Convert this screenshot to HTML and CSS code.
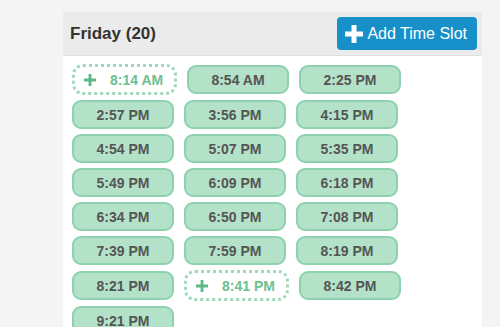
FILE: index.html
```html
<!DOCTYPE html>
<html lang="en">
<head>
    <meta charset="utf-8" />
    <title>Time Slots</title>
    <link rel="stylesheet" href="styles.css">
</head>
<body>
    <div class="day_panel">
        <div class="day_header">
            <span class="day_title">Friday (20)</span>
            <a class="add_button">
                <svg class="add_icon" viewBox="0 0 18 18" width="18" height="18">
                    <path d="M6.5 0h5v6.5H18v5h-6.5V18h-5v-6.5H0v-5h6.5z" fill="#fff" />
                </svg>
                Add Time Slot
            </a>
        </div>
        <div class="slot_wrapper">
            <a class="slot slot_new">
                <svg class="plus" viewBox="0 0 12 12" width="12" height="12"><path d="M4.6 0h2.8v4.6H12v2.8H7.4V12H4.6V7.4H0V4.6h4.6z" /></svg>
                8:14 AM
            </a>
            <a class="slot">8:54 AM</a>
            <a class="slot">2:25 PM</a>
            <a class="slot">2:57 PM</a>
            <a class="slot">3:56 PM</a>
            <a class="slot">4:15 PM</a>
            <a class="slot">4:54 PM</a>
            <a class="slot">5:07 PM</a>
            <a class="slot">5:35 PM</a>
            <a class="slot">5:49 PM</a>
            <a class="slot">6:09 PM</a>
            <a class="slot">6:18 PM</a>
            <a class="slot">6:34 PM</a>
            <a class="slot">6:50 PM</a>
            <a class="slot">7:08 PM</a>
            <a class="slot">7:39 PM</a>
            <a class="slot">7:59 PM</a>
            <a class="slot">8:19 PM</a>
            <a class="slot">8:21 PM</a>
            <a class="slot slot_new">
                <svg class="plus" viewBox="0 0 12 12" width="12" height="12"><path d="M4.6 0h2.8v4.6H12v2.8H7.4V12H4.6V7.4H0V4.6h4.6z" /></svg>
                8:41 PM
            </a>
            <a class="slot">8:42 PM</a>
            <a class="slot">9:21 PM</a>
        </div>
    </div>
</body>
</html>
```

FILE: styles.css
```css
html, body {
    margin: 0;
    padding: 0;
    background-color: #f4f4f4;
    font-family: "Liberation Sans", Arial, sans-serif;
    overflow: hidden;
}

.day_panel {
    margin: 12px 0 0 63px;
    width: 419px;
    height: 330px;
    background-color: #fff;
}

.day_header {
    display: flex;
    align-items: center;
    justify-content: space-between;
    height: 43px;
    padding: 0 5px 0 7px;
    background-color: #ebebeb;
    border-bottom: 1px solid #e0e0e0;
}

.day_title {
    font-size: 17px;
    font-weight: bold;
    color: #333;
}

.add_button {
    display: flex;
    align-items: center;
    gap: 4px;
    height: 33px;
    padding: 0 10px 0 8px;
    box-sizing: border-box;
    background-color: #1790c9;
    border-radius: 4px;
    color: #fff;
    font-size: 16px;
    cursor: pointer;
}

    .add_button .add_icon {
        display: block;
    }

.slot_wrapper {
    display: flex;
    flex-wrap: wrap;
    align-items: center;
    gap: 5px 10px;
    padding: 8px 0 0 9px;
}

.slot {
    display: flex;
    align-items: center;
    justify-content: center;
    width: 102px;
    height: 29px;
    box-sizing: border-box;
    background-color: #b3e2c9;
    border: 2px solid #8dd1ae;
    border-radius: 9px;
    color: #555;
    font-size: 14px;
    font-weight: bold;
    cursor: pointer;
}

.slot_new {
    width: 105px;
    height: 31px;
    background-color: #fff;
    border: 3px dotted #9fd8bb;
    border-radius: 11px;
    color: #6cc08f;
    justify-content: flex-start;
    padding-left: 9px;
}

    .slot_new .plus {
        display: block;
        fill: #5cb985;
        margin-right: 14px;
    }
```
